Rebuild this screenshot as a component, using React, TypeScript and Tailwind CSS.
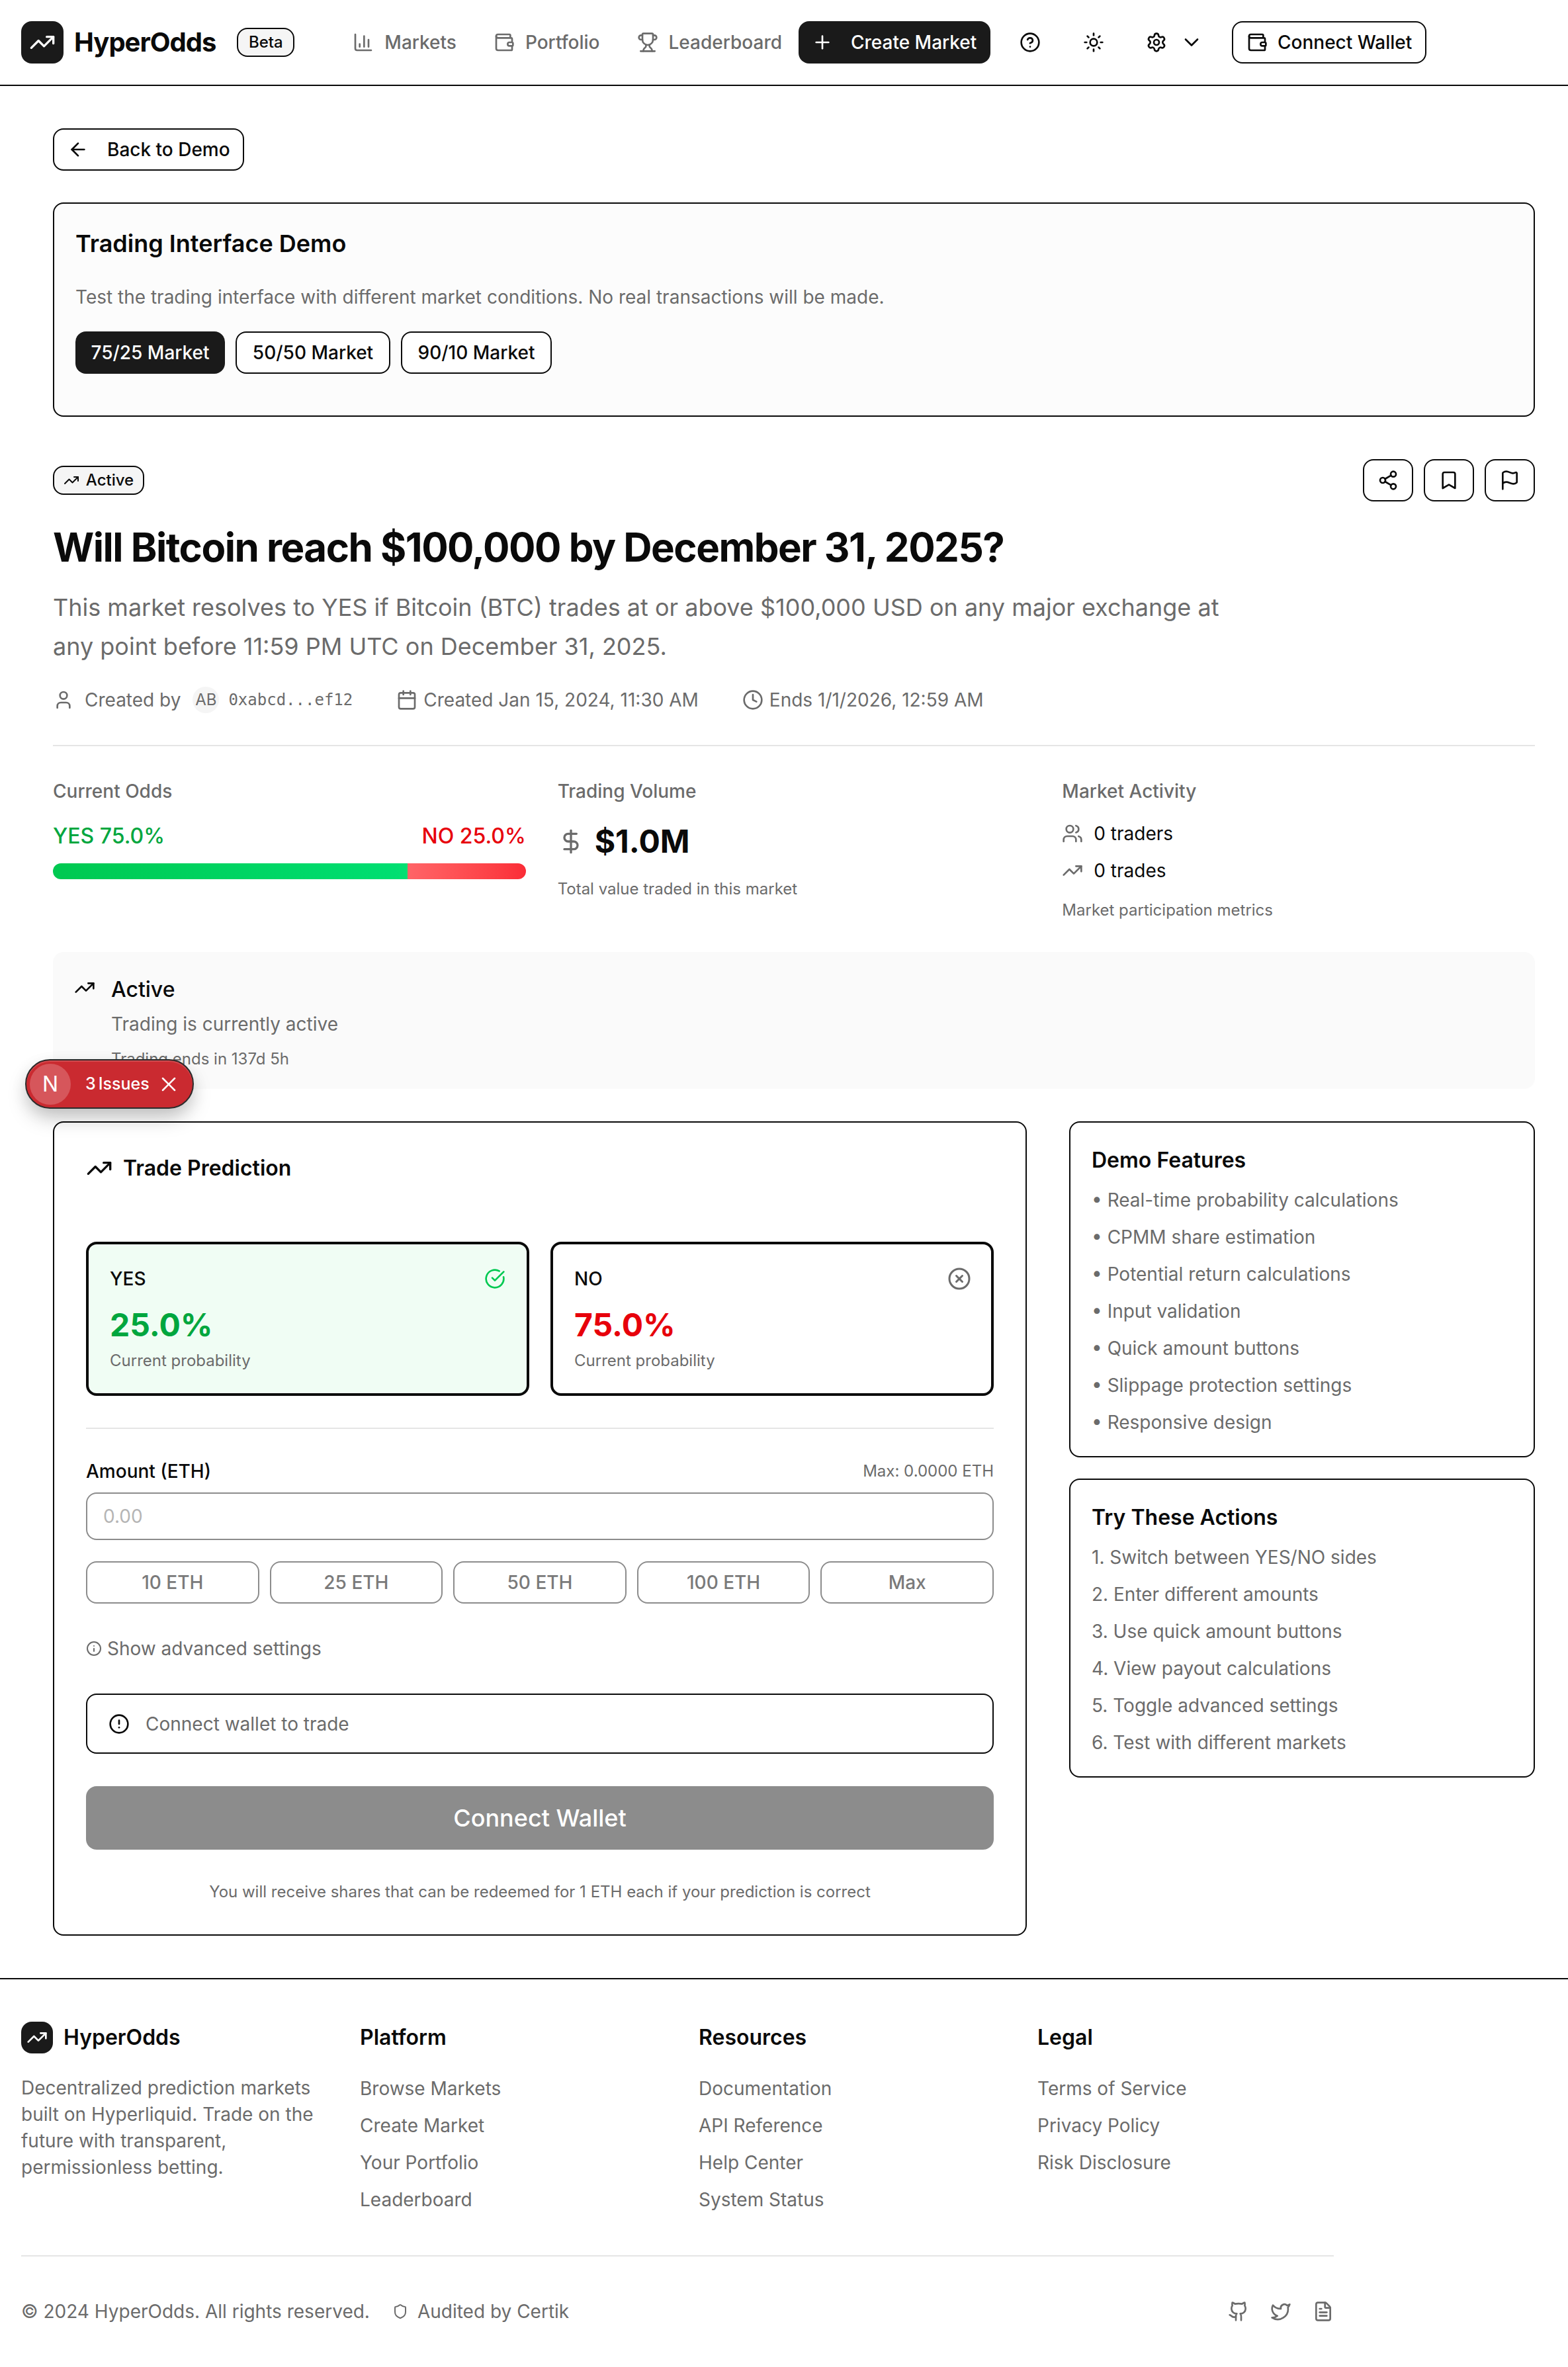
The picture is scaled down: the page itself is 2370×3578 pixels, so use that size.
import React from "react";
import {
  AlertCircle, ArrowLeft, BarChart3, Bookmark, Calendar, CircleCheckBig, ChevronDown, Clock, DollarSign,
  FileText, Flag, Github, HelpCircle, Info, Plus, Settings, Share2, Shield, Sun, TrendingUp, Trophy,
  Twitter, User, Users, Wallet, X, XCircle,
} from "lucide-react";

function Logo({ size, icon }: { size: string; icon: number }) {
  return (
    <div className={`${size} flex shrink-0 items-center justify-center rounded-[16px] bg-[#1a1a1a] text-white`}>
      <TrendingUp size={icon} strokeWidth={2} />
    </div>
  );
}

function NavItem({ icon, label }: { icon: React.ReactNode; label: string }) {
  return (
    <div className="flex h-[64px] items-center gap-[16px] px-[24px] text-[28px] font-medium text-[#6b6b6b]">
      {icon}
      <span>{label}</span>
    </div>
  );
}

function Outcome({ name, value, color, bg, icon }: { name: string; value: string; color: string; bg: string; icon: React.ReactNode }) {
  return (
    <div className={`h-[233px] rounded-[16px] border-[4px] border-[#0a0a0a] px-[32px] pt-[32px] ${bg}`}>
      <div className="flex h-[40px] items-center justify-between">
        <span className="text-[28px] font-medium text-[#0a0a0a]">{name}</span>
        {icon}
      </div>
      <div className={`mt-[22px] text-[48px] leading-[56px] font-bold ${color}`}>{value}</div>
      <div className="mt-[10px] text-[24px] leading-[32px] text-[#6b6b6b]">Current probability</div>
    </div>
  );
}

function SideCard({ title, items, className }: { title: string; items: string[]; className: string }) {
  return (
    <div className={`rounded-[16px] border-2 border-[#0a0a0a] bg-white px-[32px] pt-[35px] ${className}`}>
      <h3 className="text-[32px] leading-[44px] font-semibold text-[#0a0a0a]">{title}</h3>
      <ul className="mt-[10px] flex flex-col">
        {items.map((t) => (
          <li key={t} className="h-[56px] text-[28px] leading-[56px] text-[#6b6b6b]">{t}</li>
        ))}
      </ul>
    </div>
  );
}

function FooterCol({ title, links }: { title: string; links: string[] }) {
  return (
    <div>
      <h4 className="flex h-[48px] items-center text-[32px] font-semibold text-[#0a0a0a]">{title}</h4>
      <ul className="mt-[25px] flex flex-col">
        {links.map((l) => (
          <li key={l} className="h-[56px] text-[28px] leading-[56px] text-[#6b6b6b]">{l}</li>
        ))}
      </ul>
    </div>
  );
}

export default function App() {
  return (
    <div className="relative h-[3578px] w-full overflow-hidden bg-white font-['Inter',sans-serif] text-[#0a0a0a]">
      <header className="flex h-[130px] items-center border-b-2 border-[#0a0a0a] pl-[32px]">
        <Logo size="h-[64px] w-[64px]" icon={40} />
        <span className="ml-[16px] text-[40px] font-bold tracking-[-1px]">HyperOdds</span>
        <span className="ml-[32px] flex h-[44px] w-[87px] items-center justify-center rounded-[16px] border-2 border-[#0a0a0a] bg-[#f5f5f5] text-[24px] font-medium">Beta</span>
        <nav className="ml-[64px] flex items-center gap-[8px]">
          <NavItem icon={<BarChart3 size={32} />} label="Markets" />
          <NavItem icon={<Wallet size={32} />} label="Portfolio" />
          <NavItem icon={<Trophy size={32} />} label="Leaderboard" />
        </nav>
        <button className="ml-[1px] flex h-[64px] w-[290px] items-center gap-[27px] rounded-[16px] bg-[#1a1a1a] pl-[20px] text-[28px] font-medium text-white">
          <Plus size={32} />
          <span>Create Market</span>
        </button>
        <div className="ml-[28px] flex h-[64px] w-[64px] items-center justify-center"><HelpCircle size={32} /></div>
        <div className="ml-[32px] flex h-[64px] w-[64px] items-center justify-center"><Sun size={32} /></div>
        <div className="ml-[31px] flex h-[64px] items-center gap-[19px] pl-[16px]">
          <Settings size={32} />
          <ChevronDown size={36} strokeWidth={1.8} />
        </div>
        <button className="ml-[43px] flex h-[64px] w-[294px] items-center gap-[15px] rounded-[16px] border-2 border-[#0a0a0a] pl-[20px] text-[28px] font-medium">
          <Wallet size={32} />
          <span>Connect Wallet</span>
        </button>
      </header>

      <main className="pl-[80px] pr-[50px]">
        <div className="w-[2240px]">
          <button className="mt-[64px] flex h-[64px] w-[289px] items-center gap-[28px] rounded-[16px] border-2 border-[#0a0a0a] bg-white pl-[20px] text-[28px] font-medium">
            <ArrowLeft size={32} />
            <span>Back to Demo</span>
          </button>

          <section className="mt-[48px] h-[324px] rounded-[16px] border-2 border-[#0a0a0a] bg-[#fcfcfc] px-[32px] pt-[32px]">
            <h2 className="text-[36px] leading-[56px] font-semibold">Trading Interface Demo</h2>
            <p className="mt-[33px] text-[28px] leading-[40px] text-[#6b6b6b]">Test the trading interface with different market conditions. No real transactions will be made.</p>
            <div className="mt-[32px] flex gap-[16px]">
              <button className="h-[64px] w-[226px] rounded-[16px] bg-[#1a1a1a] text-[28px] font-medium text-white">75/25 Market</button>
              <button className="h-[64px] w-[234px] rounded-[16px] border-2 border-[#0a0a0a] bg-white text-[28px] font-medium">50/50 Market</button>
              <button className="h-[64px] w-[228px] rounded-[16px] border-2 border-[#0a0a0a] bg-white text-[28px] font-medium">90/10 Market</button>
            </div>
          </section>

          <div className="mt-[64px] flex h-[64px] items-center justify-between">
            <span className="flex h-[44px] w-[138px] items-center justify-center gap-[10px] rounded-[16px] border-2 border-[#0a0a0a] bg-[#f5f5f5] text-[24px] font-medium">
              <TrendingUp size={24} />
              Active
            </span>
            <div className="flex gap-[16px]">
              {[<Share2 size={32} key="s" />, <Bookmark size={32} key="b" />, <Flag size={32} key="f" />].map((ic, i) => (
                <button key={i} className="flex h-[64px] w-[76px] items-center justify-center rounded-[16px] border-2 border-[#0a0a0a] bg-white">{ic}</button>
              ))}
            </div>
          </div>

          <h1 className="mt-[33px] text-[60px] leading-[72px] font-bold tracking-[-1.5px]">Will Bitcoin reach $100,000 by December 31, 2025?</h1>
          <p className="mt-[26px] max-w-[1792px] text-[36px] leading-[59px] text-[#6b6b6b]">This market resolves to YES if Bitcoin (BTC) trades at or above $100,000 USD on any major exchange at any point before 11:59 PM UTC on December 31, 2025.</p>

          <div className="mt-[31px] flex h-[40px] items-center gap-[66px] text-[28px] text-[#6b6b6b]">
            <div className="flex items-center">
              <User size={32} />
              <span className="ml-[16px]">Created by</span>
              <span className="ml-[18px] flex h-[40px] w-[40px] items-center justify-center rounded-full bg-[#f5f5f5] text-[24px]">AB</span>
              <span className="ml-[14px] font-['DejaVu_Sans_Mono',monospace] text-[24px]">0xabcd...ef12</span>
            </div>
            <div className="flex items-center gap-[9px]"><Calendar size={32} /><span>Created Jan 15, 2024, 11:30 AM</span></div>
            <div className="flex items-center gap-[9px]"><Clock size={32} /><span>Ends 1/1/2026, 12:59 AM</span></div>
          </div>

          <div className="mt-[48px] h-[2px] bg-[#e5e5e5]" />

          <div className="mt-[48px] grid grid-cols-3 gap-[48px]">
            <div>
              <div className="text-[28px] leading-[40px] font-medium text-[#6b6b6b]">Current Odds</div>
              <div className="mt-[26px] flex justify-between text-[32px] leading-[44px] font-medium">
                <span className="text-green-600">YES 75.0%</span>
                <span className="text-red-600">NO 25.0%</span>
              </div>
              <div className="mt-[19px] flex h-[24px] overflow-hidden rounded-full">
                <div className="w-3/4 bg-gradient-to-r from-green-500 to-green-400" />
                <div className="w-1/4 bg-gradient-to-r from-red-400 to-red-500" />
              </div>
            </div>
            <div>
              <div className="text-[28px] leading-[40px] font-medium text-[#6b6b6b]">Trading Volume</div>
              <div className="mt-[28px] flex items-center gap-[16px]">
                <DollarSign size={40} className="text-[#6b6b6b]" />
                <span className="text-[48px] leading-[56px] font-bold">$1.0M</span>
              </div>
              <div className="mt-[28px] text-[24px] leading-[32px] text-[#6b6b6b]">Total value traded in this market</div>
            </div>
            <div>
              <div className="text-[28px] leading-[40px] font-medium text-[#6b6b6b]">Market Activity</div>
              <div className="mt-[24px] flex h-[40px] items-center gap-[16px] text-[28px]"><Users size={32} className="text-[#6b6b6b]" />0 traders</div>
              <div className="mt-[16px] flex h-[40px] items-center gap-[16px] text-[28px]"><TrendingUp size={32} className="text-[#6b6b6b]" />0 trades</div>
              <div className="mt-[24px] text-[24px] leading-[32px] text-[#6b6b6b]">Market participation metrics</div>
            </div>
          </div>

          <section className="mt-[47px] flex h-[207px] gap-[24px] rounded-[16px] bg-[#fafafa] pl-[32px] pt-[35px]">
            <TrendingUp size={32} className="mt-[3px]" />
            <div>
              <div className="text-[32px] leading-[44px] font-medium">Active</div>
              <div className="mt-[10px] text-[28px] leading-[40px] text-[#6b6b6b]">Trading is currently active</div>
              <div className="mt-[17px] text-[24px] leading-[32px] text-[#6b6b6b]">Trading ends in 137d 5h</div>
            </div>
          </section>

          <div className="mt-[49px] flex gap-[64px]">
            <section className="h-[1231px] w-[1472px] rounded-[16px] border-2 border-[#0a0a0a] bg-white px-[48px] pt-[49px]">
              <div className="flex h-[40px] items-center gap-[16px]">
                <TrendingUp size={40} />
                <h3 className="text-[32px] font-semibold">Trade Prediction</h3>
              </div>
              <div className="mt-[91px] grid grid-cols-2 gap-[32px]">
                <Outcome name="YES" value="25.0%" color="text-green-600" bg="bg-green-50" icon={<CircleCheckBig size={32} className="text-green-500" />} />
                <Outcome name="NO" value="75.0%" color="text-red-600" bg="bg-white" icon={<XCircle size={36} className="-mr-[2px] text-[#6b6b6b]" />} />
              </div>
              <div className="mt-[48px] h-[2px] bg-[#e5e5e5]" />
              <div className="mt-[48px] flex h-[32px] items-center justify-between">
                <span className="text-[28px] font-medium">Amount (ETH)</span>
                <span className="text-[24px] text-[#6b6b6b]">Max: 0.0000 ETH</span>
              </div>
              <div className="mt-[16px] flex h-[72px] items-center rounded-[16px] border-2 border-[#8c8c8c] px-[24px] text-[28px] text-[#b5b5b5]">0.00</div>
              <div className="mt-[32px] grid grid-cols-5 gap-[16px]">
                {["10 ETH", "25 ETH", "50 ETH", "100 ETH", "Max"].map((t) => (
                  <button key={t} className="h-[64px] rounded-[16px] border-2 border-[#8c8c8c] text-[28px] font-medium text-[#7a7a7a]">{t}</button>
                ))}
              </div>
              <div className="mt-[48px] flex h-[40px] items-center gap-[8px] text-[28px] text-[#6b6b6b]">
                <Info size={24} />
                Show advanced settings
              </div>
              <div className="mt-[48px] flex h-[91px] items-center gap-[24px] rounded-[16px] border-2 border-[#0a0a0a] pl-[32px] text-[28px] text-[#6b6b6b]">
                <AlertCircle size={32} className="text-[#0a0a0a]" />
                Connect wallet to trade
              </div>
              <button className="mt-[49px] h-[96px] w-full rounded-[16px] bg-[#8c8c8c] text-[36px] font-medium text-white">Connect Wallet</button>
              <p className="mt-[48px] text-center text-[24px] leading-[32px] text-[#6b6b6b]">You will receive shares that can be redeemed for 1 ETH each if your prediction is correct</p>
            </section>

            <aside className="flex w-[704px] flex-col gap-[32px]">
              <SideCard
                title="Demo Features"
                className="h-[508px]"
                items={["• Real-time probability calculations", "• CPMM share estimation", "• Potential return calculations", "• Input validation", "• Quick amount buttons", "• Slippage protection settings", "• Responsive design"]}
              />
              <SideCard
                title="Try These Actions"
                className="h-[452px]"
                items={["1. Switch between YES/NO sides", "2. Enter different amounts", "3. Use quick amount buttons", "4. View payout calculations", "5. Toggle advanced settings", "6. Test with different markets"]}
              />
            </aside>
          </div>
        </div>
      </main>

      <footer className="mt-[64px] border-t-2 border-[#0a0a0a] px-[32px] pt-[64px]">
        <div className="w-[1984px]">
          <div className="grid grid-cols-4 gap-[64px]">
            <div>
              <div className="flex h-[48px] items-center gap-[16px]">
                <Logo size="h-[48px] w-[48px]" icon={32} />
                <span className="text-[32px] font-semibold">HyperOdds</span>
              </div>
              <p className="mt-[32px] text-[28px] leading-[40px] text-[#6b6b6b]">Decentralized prediction markets built on Hyperliquid. Trade on the future with transparent, permissionless betting.</p>
            </div>
            <FooterCol title="Platform" links={["Browse Markets", "Create Market", "Your Portfolio", "Leaderboard"]} />
            <FooterCol title="Resources" links={["Documentation", "API Reference", "Help Center", "System Status"]} />
            <FooterCol title="Legal" links={["Terms of Service", "Privacy Policy", "Risk Disclosure"]} />
          </div>
          <div className="mt-[56px] h-[2px] bg-[#e5e5e5]" />
          <div className="mt-[63px] flex h-[40px] items-center justify-between text-[28px] text-[#6b6b6b]">
            <div className="flex items-center">
              <span>© 2024 HyperOdds. All rights reserved.</span>
              <Shield size={24} className="ml-[34px]" />
              <span className="ml-[14px]">Audited by Certik</span>
            </div>
            <div className="flex items-center gap-[32px]">
              <Github size={32} />
              <Twitter size={32} />
              <FileText size={32} />
            </div>
          </div>
        </div>
      </footer>

      <div className="absolute top-[1601px] left-[38px] flex h-[75px] w-[255px] items-center rounded-full border-2 border-[#2b2b2b] bg-[#ca2a30] pl-[5px] text-white shadow-[inset_0_2px_0_rgba(255,255,255,0.15),0_16px_32px_-4px_rgba(0,0,0,0.22),0_8px_24px_rgba(0,0,0,0.08)]">
        <div className="flex h-[62px] w-[62px] items-center justify-center rounded-full bg-[#d6565b] text-[32px]">N</div>
        <span className="ml-[22px] text-[25px] font-medium">3</span>
        <span className="ml-[4px] text-[25px] font-medium">Issues</span>
        <X size={36} strokeWidth={1.7} className="ml-[11px]" />
      </div>
    </div>
  );
}
